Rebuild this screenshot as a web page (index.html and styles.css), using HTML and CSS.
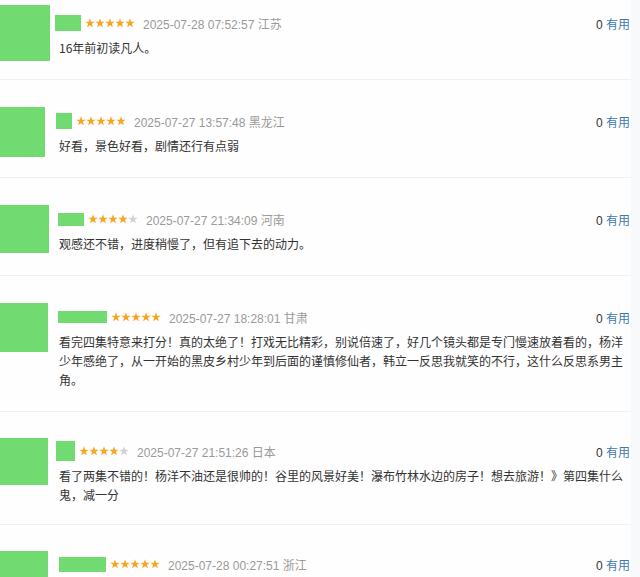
FILE: index.html
```html
<!DOCTYPE html>
<html lang="zh-CN">
<head>
    <meta charset="UTF-8">
    <meta name="viewport" content="width=device-width, initial-scale=1.0">
    <title>短评</title>
    <link rel="stylesheet" href="styles.css">
</head>
<body>

    <div class="list">

        <div class="comment first">
            <div class="avatar-col"><div class="avatar a1"></div></div>
            <div class="body">
                <div class="meta">
                    <span class="mask m1"></span>
                    <span class="stars"><i class="star"></i><i class="star"></i><i class="star"></i><i class="star"></i><i class="star"></i></span>
                    <span class="time">2025-07-28 07:52:57 江苏</span>
                    <span class="vote"><span class="count">0</span> 有用</span>
                </div>
                <p class="text">16年前初读凡人。</p>
            </div>
        </div>

        <div class="comment">
            <div class="avatar-col"><div class="avatar a2"></div></div>
            <div class="body">
                <div class="meta">
                    <span class="mask m2"></span>
                    <span class="stars"><i class="star"></i><i class="star"></i><i class="star"></i><i class="star"></i><i class="star"></i></span>
                    <span class="time">2025-07-27 13:57:48 黑龙江</span>
                    <span class="vote"><span class="count">0</span> 有用</span>
                </div>
                <p class="text">好看，景色好看，剧情还行有点弱</p>
            </div>
        </div>

        <div class="comment">
            <div class="avatar-col"><div class="avatar a3"></div></div>
            <div class="body">
                <div class="meta">
                    <span class="mask m3"></span>
                    <span class="stars"><i class="star"></i><i class="star"></i><i class="star"></i><i class="star"></i><i class="star off"></i></span>
                    <span class="time">2025-07-27 21:34:09 河南</span>
                    <span class="vote"><span class="count">0</span> 有用</span>
                </div>
                <p class="text">观感还不错，进度稍慢了，但有追下去的动力。</p>
            </div>
        </div>

        <div class="comment">
            <div class="avatar-col"><div class="avatar a4"></div></div>
            <div class="body">
                <div class="meta">
                    <span class="mask m4"></span>
                    <span class="stars"><i class="star"></i><i class="star"></i><i class="star"></i><i class="star"></i><i class="star"></i></span>
                    <span class="time">2025-07-27 18:28:01 甘肃</span>
                    <span class="vote"><span class="count">0</span> 有用</span>
                </div>
                <p class="text">看完四集特意来打分！真的太绝了！打戏无比精彩，别说倍速了，好几个镜头都是专门慢速放着看的，杨洋少年感绝了，从一开始的黑皮乡村少年到后面的谨慎修仙者，韩立一反思我就笑的不行，这什么反思系男主角。</p>
            </div>
        </div>

        <div class="comment tight">
            <div class="avatar-col"><div class="avatar a5"></div></div>
            <div class="body">
                <div class="meta">
                    <span class="mask m5"></span>
                    <span class="stars"><i class="star"></i><i class="star"></i><i class="star"></i><i class="star"></i><i class="star off"></i></span>
                    <span class="time">2025-07-27 21:51:26 日本</span>
                    <span class="vote"><span class="count">0</span> 有用</span>
                </div>
                <p class="text">看了两集不错的！杨洋不油还是很帅的！谷里的风景好美！瀑布竹林水边的房子！想去旅游！》第四集什么鬼，减一分</p>
            </div>
        </div>

        <div class="comment tight">
            <div class="avatar-col"><div class="avatar a6"></div></div>
            <div class="body">
                <div class="meta">
                    <span class="mask m6"></span>
                    <span class="stars"><i class="star"></i><i class="star"></i><i class="star"></i><i class="star"></i><i class="star"></i></span>
                    <span class="time">2025-07-28 00:27:51 浙江</span>
                    <span class="vote"><span class="count">0</span> 有用</span>
                </div>
            </div>
        </div>

    </div>

</body>
</html>
```

FILE: styles.css
```css
html, body {
    margin: 0;
    padding: 0;
    overflow: hidden;
}

body {
    font-family: "Liberation Sans", "Noto Sans CJK SC", sans-serif;
    background-color: #f8f9fb;
    color: #333;
}

.list {
    width: 631px;
    background: #fefefe;
}

.comment {
    display: flex;
    align-items: flex-start;
    border-bottom: 1px solid #eef0f3;
}

.avatar-col {
    width: 59px;
    flex: none;
}

.avatar {
    background: #71db72;
    margin-top: 27px;
}

.body {
    flex: 1;
    min-width: 0;
    padding: 32px 1px 22px 0;
}

/* first row is cut off at the top of the screenshot */
.first .avatar {
    margin-top: 5px;
}

.first .body {
    padding-top: 14px;
}

.tight .avatar {
    margin-top: 26px;
}

.tight .body {
    padding-top: 30px;
    padding-bottom: 20px;
}

.meta {
    display: flex;
    align-items: center;
    height: 18px;
}

.mask {
    display: block;
    background: #71db72;
}

.stars {
    display: flex;
    margin-left: 4px;
}

.star {
    display: block;
    width: 10px;
    height: 10px;
    background: #f7a623;
    clip-path: polygon(50% 2.5%, 61.8% 36.3%, 97.6% 37%, 69% 58.7%, 79.4% 93%, 50% 72.5%, 20.6% 93%, 31% 58.7%, 2.4% 37%, 38.2% 36.3%);
}

.star.off {
    background: #d2d2d2;
}

.time {
    margin-left: 8px;
    font-size: 12px;
    color: #9a9a9a;
}

.vote {
    margin-left: auto;
    font-size: 12px;
    color: #3f78b0;
}

.vote .count {
    color: #333;
}

.text {
    margin: 6px 0 0;
    font-family: "Noto Sans CJK SC", sans-serif;
    font-size: 12px;
    line-height: 19px;
    color: #333;
}

/* avatar and masked-name sizes, one per row */
.a1 { width: 50px; height: 56px; }
.a2 { width: 45px; height: 50px; }
.a3 { width: 49px; height: 48px; }
.a4 { width: 48px; height: 49px; }
.a5 { width: 48px; height: 47px; }
.a6 { width: 48px; height: 50px; }

.m1 { width: 26px; height: 16px; margin-left: -4px; }
.m2 { width: 16px; height: 16px; margin-left: -3px; }
.m3 { width: 26px; height: 13px; margin-left: -1px; }
.m4 { width: 49px; height: 12px; margin-left: -1px; }
.m5 { width: 19px; height: 20px; margin-left: -3px; }
.m6 { width: 47px; height: 15px; }
```
